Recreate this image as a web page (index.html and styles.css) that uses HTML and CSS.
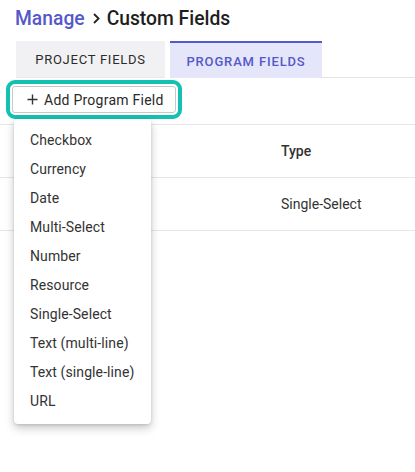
FILE: index.html
```html
<!DOCTYPE html>
<html>
<head>
<meta charset="utf-8">
<link rel="stylesheet" href="styles.css">
</head>
<body>
<div class="page">
  <h1 class="title"><span class="crumb">Manage</span><svg class="sep" width="7" height="11" viewBox="0 0 7 11"><path d="M1 1l4.6 4.5-4.6 4.5" stroke="#222" stroke-width="1.8" fill="none"/></svg><span class="current">Custom Fields</span></h1>
  <div class="tabs">
    <div class="tab">PROJECT FIELDS</div>
    <div class="tab active">PROGRAM FIELDS</div>
    <div class="tab-rest"></div>
  </div>
  <div class="toolbar">
    <button class="add-btn"><svg class="plus" width="11" height="11" viewBox="0 0 11 11"><path d="M5.5 0.5v10M0.5 5.5h10" stroke="#333" stroke-width="1.4" fill="none"/></svg><span>Add Program Field</span></button>
  </div>
  <div class="table">
    <div class="row head"><div class="cell name"></div><div class="cell type">Type</div></div>
    <div class="row"><div class="cell name"></div><div class="cell type">Single-Select</div></div>
  </div>
  <div class="menu">
    <div class="item">Checkbox</div>
    <div class="item">Currency</div>
    <div class="item">Date</div>
    <div class="item">Multi-Select</div>
    <div class="item">Number</div>
    <div class="item">Resource</div>
    <div class="item">Single-Select</div>
    <div class="item">Text (multi-line)</div>
    <div class="item">Text (single-line)</div>
    <div class="item">URL</div>
  </div>
</div>
</body>
</html>
```
FILE: styles.css
```css
* { box-sizing: border-box; }
html, body { margin: 0; padding: 0; background: #fff; }
body { font-family: Roboto, "Liberation Sans", sans-serif; color: #222; width: 415px; height: 472px; overflow: hidden; }
.page { position: relative; }
.title { margin: 0; padding: 0 0 4px 15px; height: 41px; font-size: 19.3px; font-weight: 500; line-height: 24px; display: flex; align-items: center; }
.crumb { color: #5558c8; }
.sep { margin: 0 7px 0 8px; }
.current { color: #1e1e1e; }
.tabs { display: flex; margin-left: 16px; height: 37px; }
.tab { width: 149px; background: #f1f1f3; color: #2b2b2b; font-size: 13px; letter-spacing: 0.75px; display: flex; align-items: center; justify-content: center; border-bottom: 1px solid #e8e8e8; }
.tab.active { width: 152px; margin-left: 5px; background: #e6e6fb; color: #5558c8; font-weight: 500; border-top: 2px solid #5558c8; border-bottom: none; padding-top: 1px; letter-spacing: 0.85px; }
.tab-rest { flex: 1; border-bottom: 1px solid #e4e4e4; }
.toolbar { height: 46px; padding: 8px 0 0 12px; }
.add-btn { display: flex; align-items: center; height: 27px; width: 164px; padding: 0 0 0 14px; border: 1px solid #c8c8c8; border-radius: 3px; background: #fff; font-family: Roboto, "Liberation Sans", sans-serif; font-size: 14px; color: #2a2a2a; outline: 4px solid #13c1b0; outline-offset: 2px; letter-spacing: 0.25px; }
.plus { margin-right: 6px; }
.table { border-top: 1px solid #e6e6e6; }
.row { display: flex; height: 53px; border-bottom: 1px solid #e6e6e6; align-items: center; font-size: 14px; }
.cell.name { width: 281px; }
.head .type { font-weight: 500; color: #222; }
.row .type { color: #333; }
.menu { position: absolute; left: 14px; top: 119px; width: 137px; height: 305px; background: #fff; border-radius: 4px; box-shadow: 0 4px 10px rgba(0,0,0,0.22), 0 1px 3px rgba(0,0,0,0.12); padding: 7px 0; }
.item { height: 29px; line-height: 29px; padding-left: 16px; font-size: 14px; color: #333; white-space: nowrap; letter-spacing: 0.1px; }
```
